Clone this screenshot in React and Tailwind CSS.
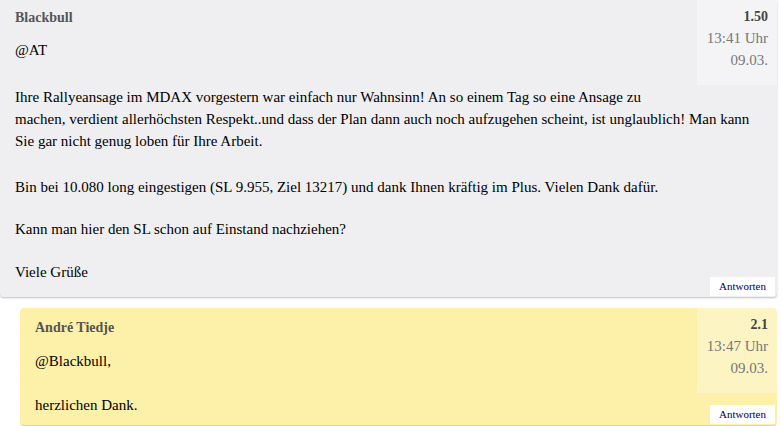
import React from "react";

const posts = [
  {
    id: "1.50",
    author: "Blackbull",
    time: "13:41 Uhr",
    date: "09.03.",
  },
  {
    id: "2.1",
    author: "André Tiedje",
    time: "13:47 Uhr",
    date: "09.03.",
  },
];

// floated so the body text wraps around it once it ends
function Meta({ post }) {
  return (
    <div className="float-right -mr-[6px] mb-[10px] ml-[8px] w-[80px] bg-white/30 pr-[9px] pt-[7px] pb-[14px] text-right">
      <div className="text-[14px] font-bold leading-[20px] text-[#444]">{post.id}</div>
      <div className="text-[15px] leading-[22px] text-[#777]">{post.time}</div>
      <div className="text-[15px] leading-[22px] text-[#777]">{post.date}</div>
    </div>
  );
}

function AnswerButton() {
  return (
    <button className="absolute bottom-[1px] right-[2px] bg-white px-[9px] py-[3px] text-[11px] leading-[13px] text-[#000055]">
      Antworten
    </button>
  );
}

export default function App() {
  const [first, second] = posts;

  return (
    <div className="w-[782px] h-[426px] overflow-hidden bg-white text-black font-['Liberation_Serif','Times_New_Roman',serif]">
      {/* Original post */}
      <div className="relative w-[777px] h-[297px] rounded-b-[4px] bg-[#efeff2] pl-[15px] pr-[6px] shadow-[0_1px_2px_rgba(0,0,0,0.25)]">
        <Meta post={first} />
        <div className="pt-[8px] text-[14px] font-bold leading-[20px] text-[#555]">{first.author}</div>
        <div className="text-[15px] leading-[22px]">
          <p className="mt-[11px]">@AT</p>
          <p className="mt-[25px]">
            Ihre Rallyeansage im MDAX vorgestern war einfach nur Wahnsinn! An so einem Tag so eine Ansage zu
            machen, verdient allerhöchsten Respekt..und dass der Plan dann auch noch aufzugehen scheint, ist
            unglaublich! Man kann Sie gar nicht genug loben für Ihre Arbeit.
          </p>
          <p className="mt-[24px]">
            Bin bei 10.080 long eingestigen (SL 9.955, Ziel 13217) und dank Ihnen kräftig im Plus. Vielen Dank dafür.
          </p>
          <p className="mt-[20px]">Kann man hier den SL schon auf Einstand nachziehen?</p>
          <p className="mt-[21px]">Viele Grüße</p>
        </div>
        <AnswerButton />
      </div>

      {/* Reply */}
      <div className="ml-[20px] mt-[11px]">
        <div className="relative w-[757px] h-[118px] rounded-[4px] border-b border-[#ecd57a] bg-[#fdf0a9] pl-[15px] pr-[6px]">
          <Meta post={second} />
          <div className="pt-[10px] text-[14px] font-bold leading-[20px] text-[#555]">{second.author}</div>
          <div className="text-[15px] leading-[22px]">
            <p className="mt-[12px]">@Blackbull,</p>
            <p className="mt-[22px]">herzlichen Dank.</p>
          </div>
          <AnswerButton />
        </div>
      </div>
    </div>
  );
}
